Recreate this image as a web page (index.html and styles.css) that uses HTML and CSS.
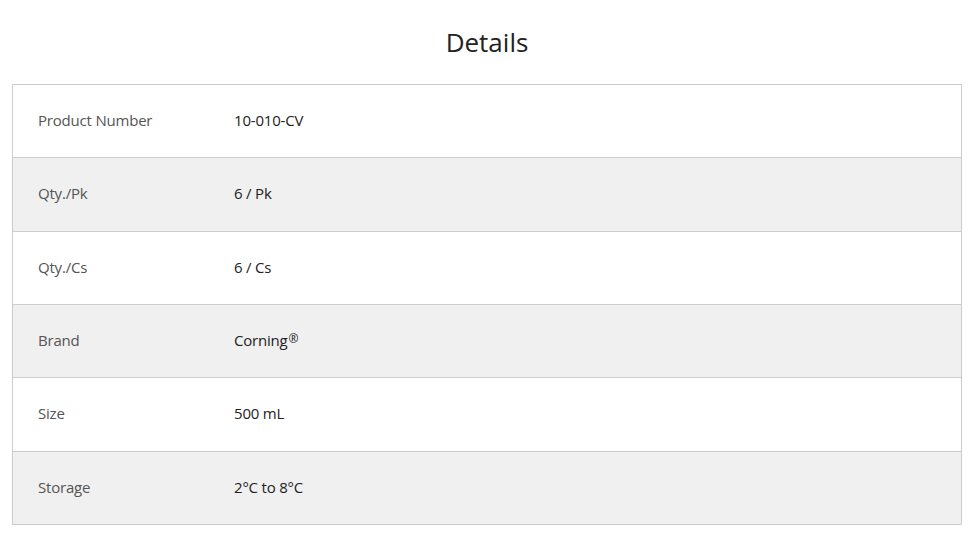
FILE: index.html
```html
<!DOCTYPE html>
<html>
<head>
<meta charset="utf-8">
<link rel="stylesheet" href="styles.css">
</head>
<body>
<div class="page">
  <h2 class="title">Details</h2>
  <div class="table">
    <div class="row"><div class="label">Product Number</div><div class="value">10-010-CV</div></div>
    <div class="row alt"><div class="label">Qty./Pk</div><div class="value">6 / Pk</div></div>
    <div class="row"><div class="label">Qty./Cs</div><div class="value">6 / Cs</div></div>
    <div class="row alt"><div class="label">Brand</div><div class="value">Corning<sup class="reg">®</sup></div></div>
    <div class="row"><div class="label">Size</div><div class="value">500 mL</div></div>
    <div class="row alt"><div class="label">Storage</div><div class="value">2°C to 8°C</div></div>
  </div>
</div>
</body>
</html>
```
FILE: styles.css
```css
html, body {
  margin: 0;
  padding: 0;
  background: #fff;
}
.page {
  padding: 0 11px 0 12px;
  font-family: "Open Sans", "Noto Sans", sans-serif;
}
.title {
  margin: 0;
  height: 84px;
  line-height: 84px;
  text-align: center;
  font-weight: 400;
  font-size: 26px;
  color: #222;
}
.table {
  border: 1px solid #cccccc;
  border-bottom: none;
}
.row {
  display: flex;
  align-items: center;
  box-sizing: border-box;
  height: 73.33px;
  padding-bottom: 2px;
  border-bottom: 1px solid #cccccc;
  font-size: 15px;
  letter-spacing: -0.2px;
}
.row.alt {
  background: #f0f0f0;
}
.label {
  width: 196px;
  padding-left: 25px;
  color: #555;
}
.value {
  color: #222;
}
.reg {
  font-size: 12px;
  line-height: 0;
  vertical-align: 3px;
  margin-left: 1px;
}
```
